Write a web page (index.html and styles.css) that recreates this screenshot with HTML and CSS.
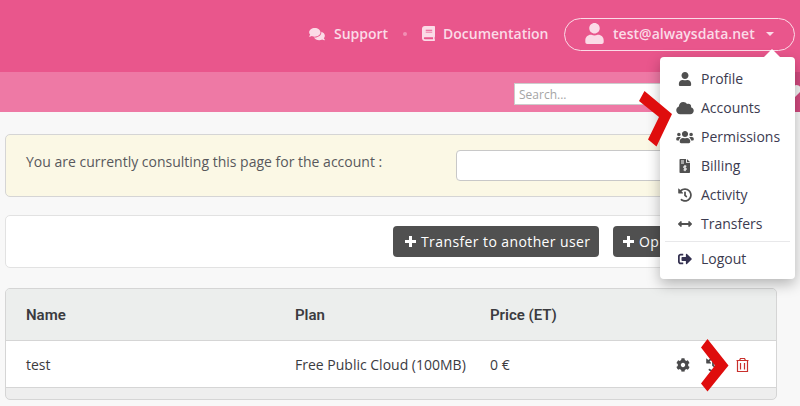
FILE: index.html
```html
<!DOCTYPE html>
<html lang="en">
<head>
<meta charset="utf-8">
<title>Accounts</title>
<link rel="stylesheet" href="styles.css">
</head>
<body>
<svg class="defs" width="0" height="0">
  <symbol id="user" viewBox="0 0 448 512"><path d="M224 256c70.7 0 128-57.3 128-128S294.7 0 224 0 96 57.3 96 128s57.3 128 128 128zm89.6 32h-16.7c-22.2 10.2-46.9 16-72.9 16s-50.6-5.8-72.9-16h-16.7C60.2 288 0 348.2 0 422.4V464c0 26.5 21.5 48 48 48h352c26.5 0 48-21.5 48-48v-41.6c0-74.2-60.2-134.4-134.4-134.4z"/></symbol>
  <symbol id="history" viewBox="0 0 512 512"><path d="M504 255.531c.253 136.64-111.18 248.372-247.82 248.468-59.015.042-113.223-20.53-155.822-54.911-11.077-8.94-11.905-25.541-1.839-35.607l11.267-11.267c8.609-8.609 22.353-9.551 31.891-1.984C173.062 425.135 212.781 440 256 440c101.705 0 184-82.311 184-184 0-101.705-82.311-184-184-184-48.814 0-93.149 18.969-126.068 49.932l50.754 50.754c10.08 10.08 2.941 27.314-11.313 27.314H24c-8.837 0-16-7.163-16-16V38.627c0-14.254 17.234-21.393 27.314-11.314l49.372 49.372C129.209 34.136 189.552 8 256 8c136.81 0 247.747 110.78 248 247.531zm-180.912 78.784l9.823-12.63c8.138-10.463 6.253-25.542-4.21-33.679L288 256.349V152c0-13.255-10.745-24-24-24h-16c-13.255 0-24 10.745-24 24v135.651l65.409 50.874c10.463 8.137 25.541 6.253 33.679-4.21z"/></symbol>
  <symbol id="plus" viewBox="0 0 11 11"><path d="M4 0h3v4h4v3H7v4H4V7H0V4h4z"/></symbol>
</svg>

<header class="topbar">
  <a class="toplink support"><svg width="16" height="14" viewBox="0 0 576 512"><path d="M416 192c0-88.4-93.1-160-208-160S0 103.6 0 192c0 34.3 14.1 65.9 38 92-13.4 30.2-35.5 54.2-35.8 54.5-2.2 2.3-2.8 5.7-1.5 8.7S4.8 352 8 352c36.6 0 66.9-12.3 88.7-25 32.2 15.7 70.3 25 111.3 25 114.9 0 208-71.6 208-160zm122 220c23.9-26 38-57.7 38-92 0-66.9-53.5-124.2-129.3-148.1.9 6.6 1.3 13.3 1.3 20.1 0 105.9-107.7 192-240 192-10.8 0-21.3-.8-31.7-1.9C207.8 439.6 281.8 480 368 480c41 0 79.1-9.2 111.3-25 21.8 12.7 52.1 25 88.7 25 3.2 0 6.1-1.9 7.3-4.8 1.3-2.9.7-6.3-1.5-8.7-.3-.3-22.4-24.2-35.8-54.5z"/></svg><span>Support</span></a>
  <i class="dot"></i>
  <a class="toplink docs"><svg width="13" height="15" viewBox="0 0 448 512" preserveAspectRatio="none"><path d="M448 360V24c0-13.3-10.7-24-24-24H96C43 0 0 43 0 96v320c0 53 43 96 96 96h328c13.3 0 24-10.7 24-24v-16c0-7.5-3.5-14.3-8.9-18.7-4.2-15.4-4.2-59.3 0-74.7 5.4-4.3 8.9-11.1 8.9-18.6zM128 134c0-3.3 2.7-6 6-6h212c3.3 0 6 2.7 6 6v20c0 3.3-2.7 6-6 6H134c-3.3 0-6-2.7-6-6v-20zm0 64c0-3.3 2.7-6 6-6h212c3.3 0 6 2.7 6 6v20c0 3.3-2.7 6-6 6H134c-3.3 0-6-2.7-6-6v-20zm253.4 250H96c-17.7 0-32-14.3-32-32 0-17.6 14.4-32 32-32h285.4c-1.9 17.1-1.9 46.9 0 64z"/></svg><span>Documentation</span></a>
  <div class="account">
    <svg width="19" height="21"><use href="#user"/></svg>
    <span class="mail">test@alwaysdata.net</span>
    <i class="caret"></i>
  </div>
</header>

<div class="subbar">
  <div class="search">Search...</div>
  <div class="favorite"><svg width="16" height="14" viewBox="0 0 16 14"><path d="M8 14L1 7C-1 4 1 0 4.500 0C6 0 7.500 1 8 2C8.500 1 10 0 11.500 0C15 0 17 4 15 7z"/></svg></div>
</div>

<main class="content">
  <section class="notice">
    <span>You are currently consulting this page for the account :</span>
    <div class="field"></div>
  </section>

  <section class="actions">
    <a class="button"><svg width="11" height="11"><use href="#plus"/></svg><span>Transfer to another user</span></a>
    <a class="button open"><svg width="11" height="11"><use href="#plus"/></svg><span>Op</span></a>
  </section>

  <section class="table">
    <div class="row head"><span>Name</span><span>Plan</span><span>Price (ET)</span></div>
    <div class="row"><span>test</span><span>Free Public Cloud (100MB)</span><span>0 €</span>
      <div class="tools">
        <svg width="14" height="14" viewBox="0 0 512 512"><path d="M487.4 315.7l-42.6-24.6c4.3-23.2 4.3-47 0-70.2l42.6-24.6c4.9-2.8 7.1-8.6 5.5-14-11.1-35.6-30-67.8-54.7-94.6-3.8-4.1-10-5.1-14.8-2.3L380.8 110c-17.9-15.4-38.5-27.3-60.8-35.1V25.8c0-5.6-3.9-10.5-9.4-11.7-36.7-8.2-74.3-7.8-109.2 0-5.5 1.2-9.4 6.1-9.4 11.7V75c-22.2 7.9-42.8 19.8-60.8 35.1L88.7 85.5c-4.9-2.8-11-1.9-14.8 2.3-24.7 26.7-43.6 58.9-54.7 94.6-1.7 5.4.6 11.2 5.5 14L67.3 221c-4.3 23.2-4.3 47 0 70.2l-42.6 24.6c-4.9 2.8-7.1 8.6-5.5 14 11.1 35.6 30 67.8 54.7 94.6 3.8 4.1 10 5.1 14.8 2.3l42.6-24.6c17.9 15.4 38.5 27.3 60.8 35.1v49.2c0 5.6 3.9 10.5 9.4 11.7 36.7 8.2 74.3 7.8 109.2 0 5.5-1.2 9.4-6.1 9.4-11.7v-49.2c22.2-7.9 42.8-19.8 60.8-35.1l42.6 24.6c4.9 2.8 11 1.9 14.8-2.3 24.7-26.7 43.6-58.9 54.7-94.6 1.5-5.5-.7-11.3-5.6-14.1zM256 336c-44.1 0-80-35.9-80-80s35.9-80 80-80 80 35.9 80 80-35.9 80-80 80z"/></svg>
        <svg width="14" height="14"><use href="#history"/></svg>
        <svg class="trash" width="13" height="14" viewBox="0 0 13 14"><path d="M.5 2.500h12M3.500 2.500l1-2h4l1 2M1.500 2.500v11h10v-11M4.500 5v6.500M8.500 5v6.500"/></svg>
      </div>
    </div>
  </section>
</main>

<nav class="menu">
  <a class="item"><svg width="18" height="14"><use href="#user"/></svg><span>Profile</span></a>
  <a class="item"><svg width="18" height="14" viewBox="0 0 640 512"><path d="M537.6 226.6c4.1-10.7 6.4-22.4 6.4-34.6 0-53-43-96-96-96-19.7 0-38.1 6-53.3 16.2C367 64.2 315.3 32 256 32c-88.4 0-160 71.6-160 160 0 2.7.1 5.4.2 8.1C40.2 219.8 0 273.2 0 336c0 79.5 64.5 144 144 144h368c70.7 0 128-57.3 128-128 0-61.9-44-113.6-102.4-125.4z"/></svg><span>Accounts</span></a>
  <a class="item"><svg width="18" height="14" viewBox="0 0 640 512"><path d="M96 224c35.3 0 64-28.7 64-64s-28.7-64-64-64-64 28.7-64 64 28.7 64 64 64zm448 0c35.3 0 64-28.7 64-64s-28.7-64-64-64-64 28.7-64 64 28.7 64 64 64zm32 32h-64c-17.6 0-33.5 7.1-45.1 18.6 40.3 22.1 68.9 62 75.1 109.4h66c17.7 0 32-14.3 32-32v-32c0-35.3-28.7-64-64-64zm-256 0c61.9 0 112-50.1 112-112S381.9 32 320 32 208 82.1 208 144s50.1 112 112 112zm76.8 32h-8.3c-20.8 10-43.9 16-68.5 16s-47.6-6-68.5-16h-8.3C179.6 288 128 339.6 128 403.2V432c0 26.5 21.5 48 48 48h288c26.5 0 48-21.5 48-48v-28.8c0-63.6-51.6-115.2-115.2-115.2zm-223.7-13.4C161.5 263.1 145.6 256 128 256H64c-35.3 0-64 28.7-64 64v32c0 17.7 14.3 32 32 32h65.9c6.3-47.4 34.9-87.3 75.2-109.4z"/></svg><span>Permissions</span></a>
  <a class="item"><svg width="18" height="14" viewBox="0 0 18 14"><path d="M4.300 0H10v3.700h4V13.200q0 .8-.8.8H4.300q-.8 0-.8-.8V.8q0-.8.8-.8zM10.900 0l3.100 2.900h-3.100z"/><path class="cut" d="M5 2h3M5 4h3M10.400 7.200H8.600q-1 0-1 .9t1 1h.8q1 0 1 .9t-1 .9H7.500M9 6.200v6"/></svg><span>Billing</span></a>
  <a class="item"><svg width="18" height="14"><use href="#history"/></svg><span>Activity</span></a>
  <a class="item"><svg width="18" height="14" viewBox="0 0 512 512"><path d="M377.941 169.941V216H134.059v-46.059c0-21.382-25.851-32.09-40.971-16.971L7.029 239.029c-9.373 9.373-9.373 24.568 0 33.941l86.059 86.059c15.119 15.119 40.971 4.411 40.971-16.971V296h243.882v46.059c0 21.382 25.851 32.09 40.971 16.971l86.059-86.059c9.373-9.373 9.373-24.568 0-33.941l-86.059-86.059c-15.119-15.12-40.971-4.412-40.971 16.97z"/></svg><span>Transfers</span></a>
  <hr class="rule">
  <a class="item logout"><svg width="18" height="14" viewBox="0 0 512 512"><path d="M497 273L329 441c-15 15-41 4.5-41-17v-96H152c-13.3 0-24-10.7-24-24v-96c0-13.3 10.7-24 24-24h136V88c0-21.4 25.9-32 41-17l168 168c9.3 9.4 9.3 24.6 0 34zM192 436v-40c0-6.6-5.4-12-12-12H96c-17.7 0-32-14.3-32-32V160c0-17.7 14.3-32 32-32h84c6.6 0 12-5.4 12-12V76c0-6.6-5.4-12-12-12H96c-53 0-96 43-96 96v192c0 53 43 96 96 96h84c6.6 0 12-5.4 12-12z"/></svg><span>Logout</span></a>
</nav>

<svg class="marks" width="800" height="406" viewBox="0 0 800 406"><path d="M644.500 91L672 114L656.500 146.500L648 139.500L659 117L639 101z"/><path d="M707.500 339L728.500 365.500L707.500 391.500L701 383.500L715 365.500L701 347.500z"/></svg>
</body>
</html>
```
FILE: styles.css
```css
* { box-sizing: border-box; }
body { margin: 0; width: 800px; height: 406px; overflow: hidden; position: relative; background: #f8f8f8; font: 14px/20px "Open Sans", sans-serif; color: #3b3b3f; }
svg { display: block; flex: none; fill: currentColor; }
.defs { position: absolute; }
.topbar { height: 72px; padding: 0 5px 4px 309px; display: flex; align-items: center; background: #e9568c; color: #fbdbe7; font-weight: 600; }
.toplink { display: flex; align-items: center; }
.support { gap: 9px; width: 94px; }
.dot { width: 4px; height: 4px; border-radius: 50%; background: #f18fb4; }
.docs { gap: 8px; margin-left: 15px; }
.docs svg { margin-top: -1px; }
.account { margin-left: auto; width: 231px; height: 33px; border: 1px solid #fbdbe7; border-radius: 17px; display: flex; align-items: center; padding-left: 20px; }
.account svg { margin-top: -2px; }
.mail { margin-left: 9px; width: 143px; white-space: nowrap; letter-spacing: .03px; }
.caret { margin-left: 10px; border: 4px solid transparent; border-top-color: #fbdbe7; border-bottom: 0; }
.subbar { height: 40px; display: flex; align-items: center; padding-left: 514px; background: #ee79a5; }
.search { width: 200px; height: 22px; margin-top: 4px; border: 1px solid #ccc; padding-left: 4px; line-height: 21px; background: #fff; color: #a5a5a5; font-size: 12px; }
.favorite { margin-left: auto; width: 22px; height: 40px; padding: 13px 0 0 7px; overflow: hidden; background: #d24a7f; color: #f4f4f4; }
.content { padding: 22px 23px 0 5px; }
.notice { height: 63px; border: 1px solid #d5d5d5; border-radius: 5px; background: #fbf8e5; display: flex; padding: 15px 20px 0; color: #58585c; }
.notice > span { width: 430px; line-height: 24px; }
.field { width: 300px; height: 31px; border: 1px solid #c8c8c8; border-radius: 4px; background: #fff; }
.actions { height: 53px; margin-top: 18px; border: 1px solid #e2e2e2; border-radius: 5px; background: #fff; display: flex; align-items: flex-start; gap: 14px; padding: 10px 0 0 387px; overflow: hidden; }
.button { height: 31px; width: 206px; padding-left: 12px; flex: none; display: flex; align-items: center; gap: 5px; border-radius: 4px; background: #505050; color: #fff; white-space: nowrap; letter-spacing: .4px; }
.open { padding-left: 10px; }
.table { height: 112px; margin-top: 20px; border: 1px solid #d5d5d5; border-radius: 5px; background: #eee; overflow: hidden; }
.row { height: 47px; display: grid; grid-template-columns: 269px 195px 186px 90px; align-items: center; padding: 2px 0 0 20px; background: #fff; border-bottom: 1px solid #d5d5d5; }
.head { height: 52px; padding-top: 0; background: #eceeed; font: 600 15px Roboto, sans-serif; }
.tools { display: flex; gap: 16px; color: #4a4a4c; }
.trash { fill: none; stroke: #c9302c; stroke-width: 1.2; }
.menu { position: absolute; left: 660px; top: 57px; width: 135px; height: 222px; padding: 7px 5px; border-radius: 4px; background: #fff; box-shadow: 0 5px 14px rgba(0,0,0,.28); color: #3c3b50; }
.menu::before { content: ""; position: absolute; left: 104px; top: -8px; border: 8px solid transparent; border-bottom-color: #fff; border-top: 0; }
.item { height: 29px; display: flex; align-items: center; gap: 7px; padding-left: 11px; }
.item svg { color: #505050; }
.cut { fill: none; stroke: #fff; stroke-width: 1; }
.rule { margin: 3px 0 2px; height: 1px; border: 0; background: #e8e8ea; }
.logout svg { color: #343150; }
.marks { position: absolute; left: 0; top: 0; fill: #df0d0d; pointer-events: none; }
```
